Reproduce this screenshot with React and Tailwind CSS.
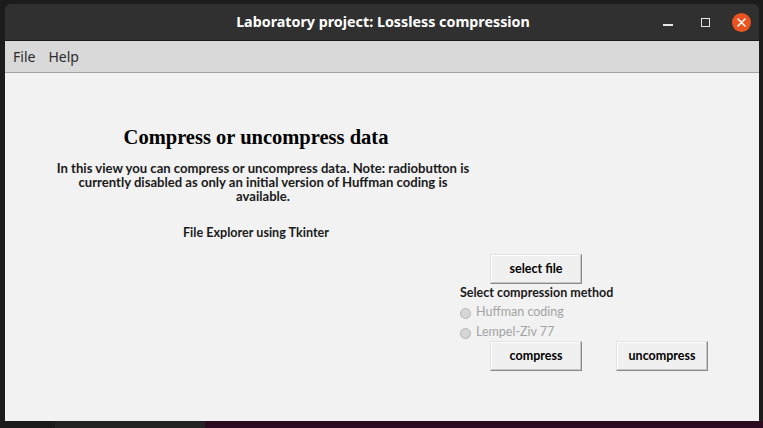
import React from 'react';

const TkButton = ({ children, className = '' }) => (
  <button
    type="button"
    className={`h-[30px] w-[92px] bg-[#f0f0f0] border border-t-[#e3e3e3] border-l-[#e3e3e3] border-r-[#8a8a8a] border-b-[#8a8a8a] shadow-[inset_-1px_-1px_0_#c8c8c8,inset_1px_1px_0_#ffffff] text-[12.5px] font-bold text-black flex items-center justify-center ${className}`}
  >
    {children}
  </button>
);

const Radio = ({ label }) => (
  <div className="flex items-center h-[20px]">
    <span className="w-[11px] h-[11px] rounded-full bg-[#d6d6d6] border border-[#b5b5b5] mt-[3px]" />
    <span className="ml-[5px] text-[12.5px] text-[#a3a3a3]">{label}</span>
  </div>
);

const App = () => {
  return (
    <div className="w-[763px] h-[428px] bg-[#1c1c1c] overflow-hidden flex flex-col" style={{ fontFamily: 'Lato, "Open Sans", sans-serif' }}>
      <div className="pt-[4px] pl-[5px] flex">
        {/* window */}
        <div className="w-[754px] h-[417px] flex flex-col rounded-t-[6px] overflow-hidden">
          {/* title bar */}
          <div className="h-[36px] bg-[#303030] flex items-center relative shrink-0">
            <div className="flex-1 text-center text-white text-[14.3px] font-bold pl-[2px]" style={{ fontFamily: '"Noto Sans", sans-serif' }}>
              Laboratory project: Lossless compression
            </div>
            <div className="absolute right-[8px] top-0 h-[36px] flex items-center gap-[20px]">
              <span className="w-[10px] h-[2px] bg-[#e6e6e6] mt-[6px]" />
              <span className="w-[9px] h-[9px] border border-[#e6e6e6] ml-[8px]" />
              <span className="w-[19px] h-[19px] rounded-full bg-[#e95420] flex items-center justify-center ml-[2px]">
                <svg width="9" height="9" viewBox="0 0 9 9">
                  <path d="M1 1L8 8M8 1L1 8" stroke="#ffffff" strokeWidth="1.5" strokeLinecap="round" />
                </svg>
              </span>
            </div>
          </div>
          <div className="h-[1px] bg-[#1a1a1a] shrink-0" />
          {/* menu bar */}
          <div className="h-[31px] bg-[#d9d9d9] border-b border-[#a3a3a3] flex items-center gap-[13px] pl-[8px] text-[14px] text-[#2b2b2b] shrink-0 box-content" style={{ fontFamily: '"Noto Sans", sans-serif' }}>
            <span>File</span>
            <span>Help</span>
          </div>
          {/* content */}
          <div className="flex-1 bg-[#f2f2f2] flex flex-col">
            <div className="w-[502px] flex flex-col items-center">
              <h1 className="mt-[52px] text-[20.5px] font-bold text-black leading-[24px]" style={{ fontFamily: '"Liberation Serif", serif' }}>
                Compress or uncompress data
              </h1>
              <p className="mt-[12px] w-[416px] ml-[14px] text-center text-[13.1px] font-bold text-[#1a1a1a] leading-[14px]">
                In this view you can compress or uncompress data. Note: radiobutton is currently disabled as only an initial version of Huffman coding is available.
              </p>
              <p className="mt-[23px] text-[12.6px] font-bold text-[#1a1a1a] leading-[14px]">File Explorer using Tkinter</p>
            </div>
            <div className="ml-[455px] mt-[14px] flex flex-col">
              <TkButton className="ml-[30px]">select file</TkButton>
              <div className="mt-[1px] text-[12.5px] font-bold text-[#1a1a1a] h-[17px] flex items-center">Select compression method</div>
              <Radio label="Huffman coding" />
              <Radio label="Lempel-Ziv 77" />
              <div className="flex ml-[30px] gap-[34px] mt-[-1px]">
                <TkButton>compress</TkButton>
                <TkButton>uncompress</TkButton>
              </div>
            </div>
          </div>
        </div>
      </div>
      <div className="flex-1 flex">
        <div className="w-[55px] bg-[#1b1b1b]" />
        <div className="w-[150px] bg-[#232323]" />
        <div className="flex-1 bg-[#2c0a1f]" />
      </div>
    </div>
  );
};

export default App;
